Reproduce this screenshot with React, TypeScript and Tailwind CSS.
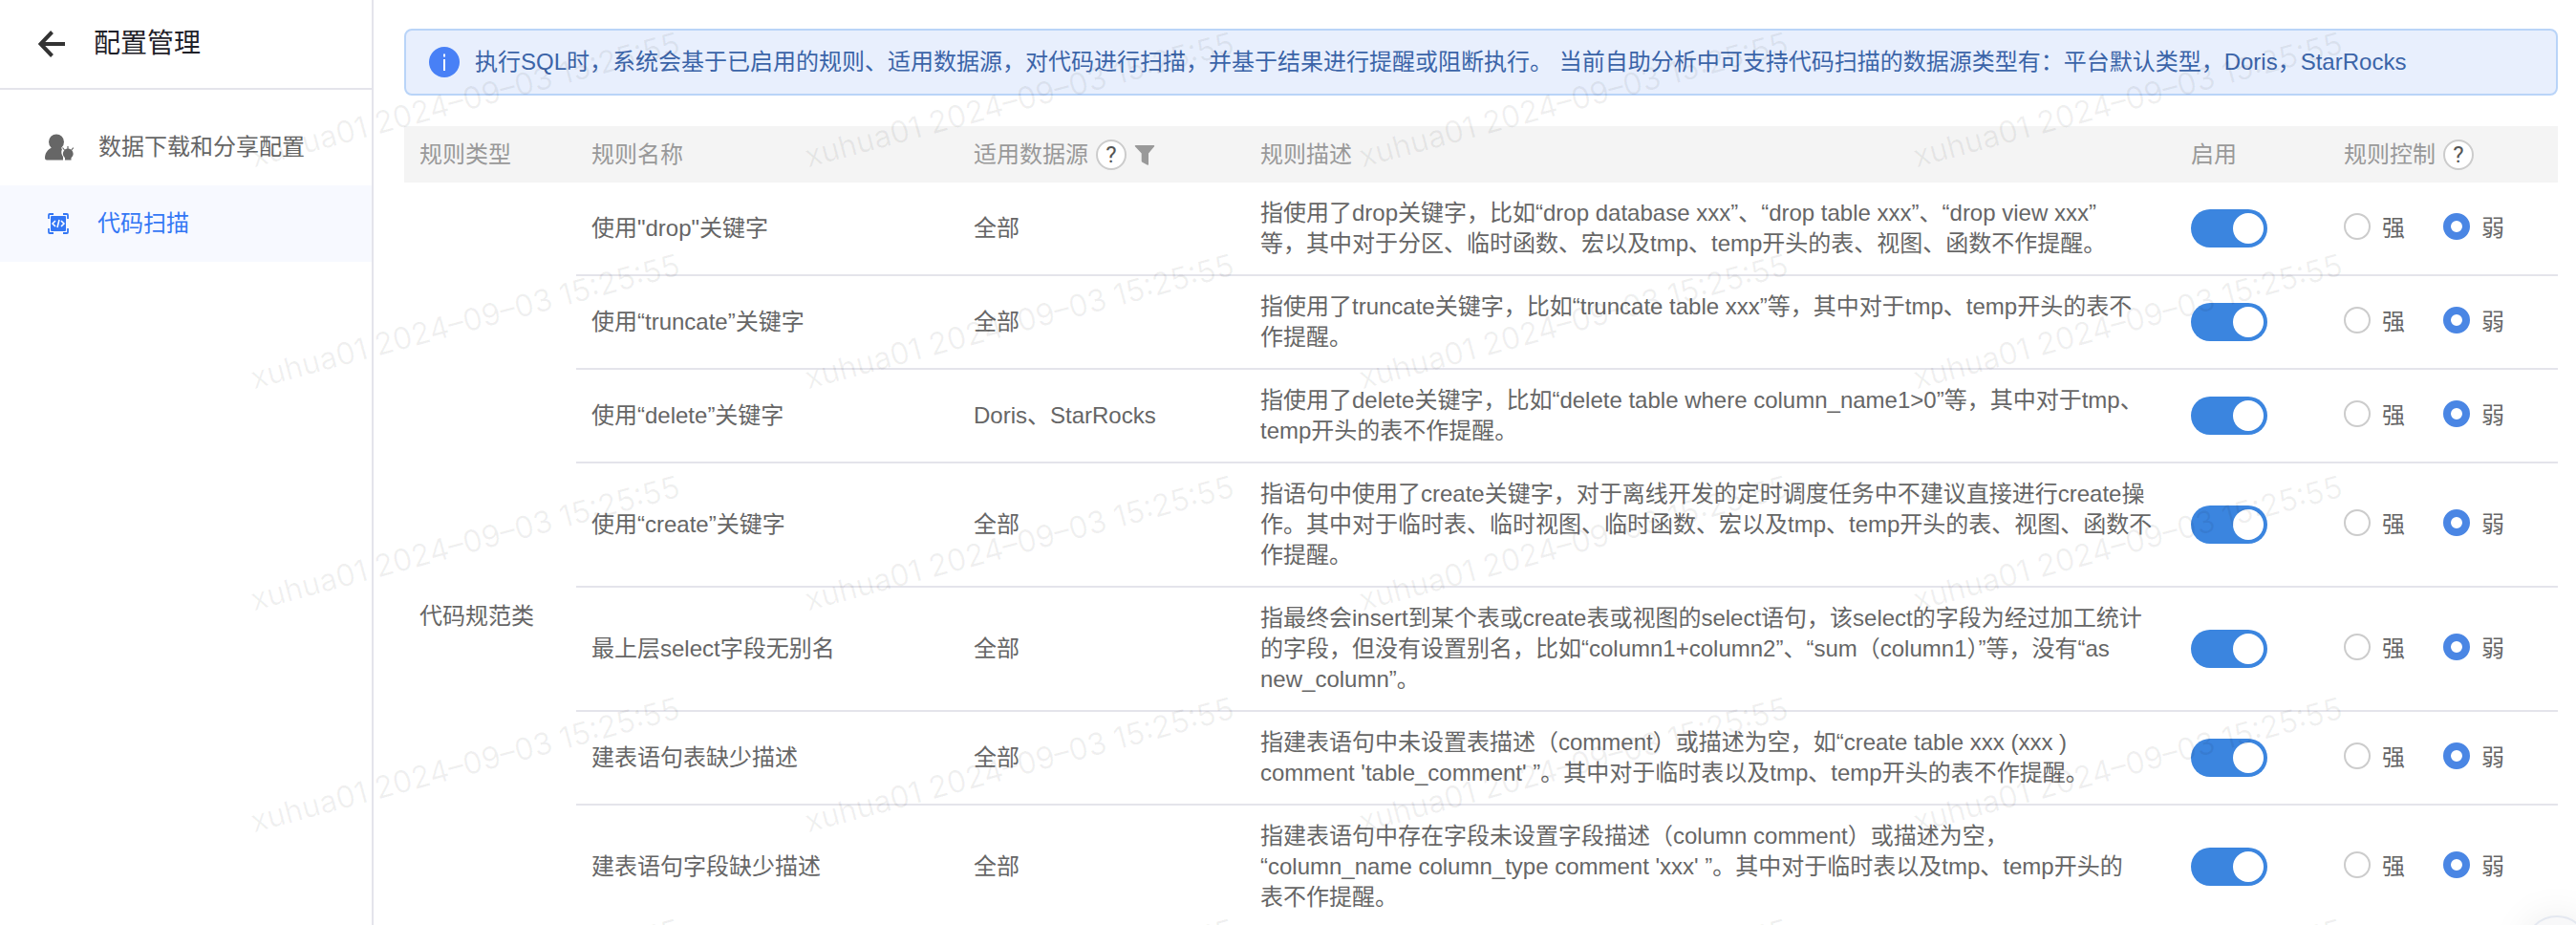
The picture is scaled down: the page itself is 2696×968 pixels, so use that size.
import React, { useState } from 'react';

type Rule = {
  name: string;
  source: string;
  desc: string;
};

const rules: Rule[] = [
  {
    name: '使用"drop"关键字',
    source: '全部',
    desc: '指使用了drop关键字，比如“drop database xxx”、“drop table xxx”、“drop view xxx”\n等，其中对于分区、临时函数、宏以及tmp、temp开头的表、视图、函数不作提醒。',
  },
  {
    name: '使用“truncate”关键字',
    source: '全部',
    desc: '指使用了truncate关键字，比如“truncate table xxx”等，其中对于tmp、temp开头的表不\n作提醒。',
  },
  {
    name: '使用“delete”关键字',
    source: 'Doris、StarRocks',
    desc: '指使用了delete关键字，比如“delete table where column_name1>0”等，其中对于tmp、\ntemp开头的表不作提醒。',
  },
  {
    name: '使用“create”关键字',
    source: '全部',
    desc: '指语句中使用了create关键字，对于离线开发的定时调度任务中不建议直接进行create操\n作。其中对于临时表、临时视图、临时函数、宏以及tmp、temp开头的表、视图、函数不\n作提醒。',
  },
  {
    name: '最上层select字段无别名',
    source: '全部',
    desc: '指最终会insert到某个表或create表或视图的select语句，该select的字段为经过加工统计\n的字段，但没有设置别名，比如“column1+column2”、“sum（column1）”等，没有“as\nnew_column”。',
  },
  {
    name: '建表语句表缺少描述',
    source: '全部',
    desc: '指建表语句中未设置表描述（comment）或描述为空，如“create table xxx (xxx )\ncomment \'table_comment\' ”。其中对于临时表以及tmp、temp开头的表不作提醒。',
  },
  {
    name: '建表语句字段缺少描述',
    source: '全部',
    desc: '指建表语句中存在字段未设置字段描述（column comment）或描述为空，\n“column_name column_type comment \'xxx\' ”。其中对于临时表以及tmp、temp开头的\n表不作提醒。',
  },
];

const BackIcon = () => (
  <svg viewBox="0 0 28 28" className="h-7 w-7" fill="none" stroke="#333" strokeWidth="4">
    <path d="M14.500 1.500 2.500 14l12 12.500M2.500 14H28" />
  </svg>
);

const UserIcon = () => (
  <svg viewBox="0 0 30 28" className="h-7 w-[30px]" fill="#666">
    <circle cx="12" cy="8.500" r="8" />
    <path d="M7.500 14.500h9l1.500 1.500c-1.500 3-.5 6 1 8v3.500H2a2 2 0 0 1-2-2c0-5 2.500-9 7.500-11z" />
    <path d="M24 15.500a5.500 5.500 0 0 1 3.500 9.800V27.500h-6.500v-2.200A5.500 5.500 0 0 1 24 15.500z" />
    <path d="M24 13v3M18.500 14.500l2 2.500M29.800 14.500l-2 2.500" stroke="#666" strokeWidth="1.200" />
  </svg>
);

const ScanIcon = () => (
  <svg viewBox="0 0 22 22" className="h-[22px] w-[22px]" fill="none">
    <path d="M1 6V2a1 1 0 0 1 1-1h4M16 1h4a1 1 0 0 1 1 1v4M21 16v4a1 1 0 0 1-1 1h-4M6 21H2a1 1 0 0 1-1-1v-4" stroke="#3477f5" strokeWidth="1.800" />
    <rect x="3" y="3" width="16" height="16" rx="1" fill="#3477f5" />
    <path d="M8 8l-3 3 3 3M14 8l3 3-3 3M12 7l-2 8" stroke="#fff" strokeWidth="1.500" />
  </svg>
);

const FilterIcon = () => (
  <svg viewBox="0 0 22 22" className="h-[22px] w-[22px]" fill="#999">
    <path d="M1.500 1h19a.8.8 0 0 1 .6 1.300L15 9.500V21a.8.8 0 0 1-1 .8l-5.500-3a1.500 1.500 0 0 1-.8-1.300v-8L.9 2.300A.8.8 0 0 1 1.500 1z" />
  </svg>
);

const HelpButton = () => (
  <button
    type="button"
    aria-label="帮助"
    className="flex h-8 w-8 items-center justify-center rounded-full border-2 border-[#ccc] bg-white font-['Roboto',sans-serif] text-2xl leading-none text-[#555]"
  >
    ?
  </button>
);

const RuleRow = ({ rule, index }: { rule: Rule; index: number }) => {
  const [enabled, setEnabled] = useState(true);
  const [level, setLevel] = useState('弱');
  const line = index < rules.length - 1 ? 'border-b-2 border-[#e4e4eb]' : '';

  return (
    <tr>
      {index === 0 && (
        <td rowSpan={rules.length} className="px-4 pt-32 align-middle">代码规范类</td>
      )}
      <td className={`px-4 ${line}`}>{rule.name}</td>
      <td className={`px-4 ${line}`}>{rule.source}</td>
      <td className={`whitespace-pre-line py-4 pl-4 ${line}`}>{rule.desc}</td>
      <td className={`px-4 ${line}`}>
        <input
          type="checkbox"
          role="switch"
          aria-label={`启用 ${rule.name}`}
          checked={enabled}
          onChange={(e) => setEnabled(e.target.checked)}
          className="block h-10 w-20 appearance-none rounded-full bg-[#ccc] p-1 before:block before:h-8 before:w-8 before:rounded-full before:bg-white checked:bg-[#3b85df] checked:before:ml-10"
        />
      </td>
      <td className={`px-4 ${line}`}>
        <div className="flex gap-10">
          {['强', '弱'].map((item) => (
            <label key={item} className="flex items-start gap-3">
              <input
                type="radio"
                name={`level-${index}`}
                checked={level === item}
                onChange={() => setLevel(item)}
                className="h-7 w-7 appearance-none rounded-full border-2 border-[#ccc] bg-white checked:border-8 checked:border-[#4a86e4]"
              />
              {item}
            </label>
          ))}
        </div>
      </td>
    </tr>
  );
};

const Watermark = () => (
  <div
    aria-hidden="true"
    className="pointer-events-none absolute inset-0 grid auto-rows-[232px] grid-cols-[repeat(4,580px)] overflow-hidden pl-[268px] font-['Inter','Liberation_Sans',sans-serif] text-[32px] leading-10 text-black/6"
  >
    {Array.from({ length: 20 }, (_, i) => (
      <span key={i} className="origin-bottom-left -rotate-15 self-start whitespace-nowrap pt-36">
        xuhua01 2024–09–03 15:25:55
      </span>
    ))}
  </div>
);

const App = () => (
  <div className="relative flex h-screen overflow-hidden bg-white font-['Liberation_Sans','Noto_Sans_CJK_SC',sans-serif] text-2xl leading-8 text-[#666]">
    <aside className="w-[391px] shrink-0 border-r-2 border-[#e4e4eb]">
      <header className="flex h-[94px] items-center gap-[30px] border-b-2 border-[#e4e4eb] pl-10">
        <button type="button" aria-label="返回">
          <BackIcon />
        </button>
        <h1 className="text-[28px] text-[#1f2129]">配置管理</h1>
      </header>
      <nav className="pt-5">
        <a href="#download" className="flex h-20 items-center gap-[26px] pl-[47px]">
          <UserIcon />
          数据下载和分享配置
        </a>
        <a href="#scan" className="flex h-20 items-center gap-[30px] bg-[#f7f9ff] pl-[50px] text-[#3477f5]">
          <ScanIcon />
          代码扫描
        </a>
      </nav>
    </aside>

    <main className="min-w-0 flex-1 pl-8 pr-[19px] pt-[30px]">
      <div className="flex h-[70px] items-center gap-4 rounded-lg border-2 border-[#b9d4f8] bg-[#e8effd] pl-6 text-[#3b64a8]">
        <svg viewBox="0 0 32 32" className="h-8 w-8" fill="#4880f6">
          <circle cx="16" cy="16" r="16" />
          <path d="M15 13h2v12h-2zM15 7.500h2v3h-2z" fill="#fff" />
        </svg>
        <p>
          执行SQL时，系统会基于已启用的规则、适用数据源，对代码进行扫描，并基于结果进行提醒或阻断执行。 当前自助分析中可支持代码扫描的数据源类型有：平台默认类型，Doris，StarRocks
        </p>
      </div>

      <table className="mt-8 w-full table-fixed border-separate border-spacing-0 text-left">
        <colgroup>
          <col className="w-[180px]" />
          <col className="w-[400px]" />
          <col className="w-[300px]" />
          <col />
          <col className="w-[160px]" />
          <col className="w-[240px]" />
        </colgroup>
        <thead className="bg-[#f4f4f4] text-[#999]">
          <tr className="h-[59px]">
            <th className="px-4 font-normal">规则类型</th>
            <th className="px-4 font-normal">规则名称</th>
            <th className="px-4 font-normal">
              <div className="flex items-center gap-2">
                适用数据源
                <HelpButton />
                <button type="button" aria-label="筛选">
                  <FilterIcon />
                </button>
              </div>
            </th>
            <th className="px-4 font-normal">规则描述</th>
            <th className="px-4 font-normal">启用</th>
            <th className="px-4 font-normal">
              <div className="flex items-center gap-2">
                规则控制
                <HelpButton />
              </div>
            </th>
          </tr>
        </thead>
        <tbody>
          {rules.map((rule, index) => (
            <RuleRow key={rule.name} rule={rule} index={index} />
          ))}
        </tbody>
      </table>
    </main>

    <button
      type="button"
      aria-label="更多"
      className="absolute -bottom-[58px] -right-3.5 h-[68px] w-[68px] rounded-full border-2 border-[#e4e8f0] bg-[#f8f8f9] shadow-[0_0_40px_rgba(0,0,0,0.08)]"
    />

    <Watermark />
  </div>
);

export default App;
